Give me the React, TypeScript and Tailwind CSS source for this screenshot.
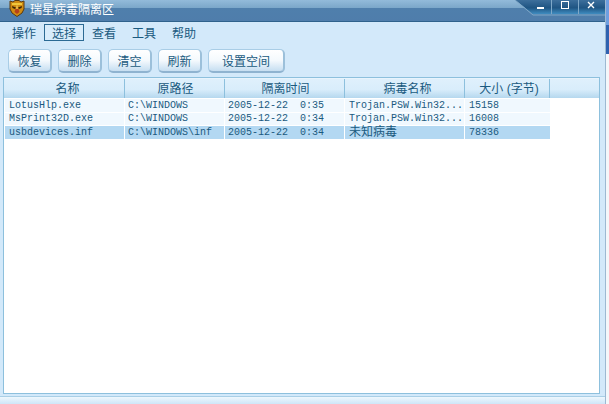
import React from "react";

const cjk = "font-['Noto_Sans_CJK_SC','Liberation_Sans',sans-serif]";
const mono = "font-['Liberation_Mono','Noto_Sans_CJK_SC',monospace]";

const menus = [
  { label: "操作", active: false },
  { label: "选择", active: true },
  { label: "查看", active: false },
  { label: "工具", active: false },
  { label: "帮助", active: false },
];

const buttons = [
  { label: "恢复", width: "w-[44px]" },
  { label: "删除", width: "w-[44px]" },
  { label: "清空", width: "w-[44px]" },
  { label: "刷新", width: "w-[44px]" },
  { label: "设置空间", width: "w-[77px]" },
];

const columns = [
  { label: "名称", width: "w-[120px] pl-[6px]" },
  { label: "原路径", width: "w-[100px] pl-[2px]" },
  { label: "隔离时间", width: "w-[120px] pl-[2px]" },
  { label: "病毒名称", width: "w-[120px] pl-[6px]" },
  { label: "大小 (字节)", width: "w-[85px] pl-[4px]" },
];

const rows = [
  { name: "LotusHlp.exe", path: "C:\\WINDOWS", time: "2005-12-22  0:35", virus: "Trojan.PSW.Win32...", size: "15158", selected: false, box: "h-[13px] mb-[1px] bg-[#f0f8fe]" },
  { name: "MsPrint32D.exe", path: "C:\\WINDOWS", time: "2005-12-22  0:34", virus: "Trojan.PSW.Win32...", size: "16008", selected: false, box: "h-[12px] mb-[1px] bg-[#f0f8fe]" },
  { name: "usbdevices.inf", path: "C:\\WINDOWS\\inf", time: "2005-12-22  0:34", virus: "未知病毒", size: "78336", selected: true, box: "h-[13px] bg-[#b3d8f2]" },
];

const LionLogo = () => (
  <svg width="16" height="17" viewBox="0 0 16 17" className="shrink-0">
    <path d="M1 1 L4 2 L6 0.5 L10 0.5 L12 2 L15 1 L15 9 L13 13 L8 16.5 L3 13 L1 9 Z" fill="#d08c12" stroke="#5a3a10" strokeWidth="1" />
    <path d="M3 3 L13 3 L13 5 L3 5 Z" fill="#f0c83c" />
    <path d="M3 6 L7 7.5 L6 9 L3.5 8 Z M13 6 L9 7.5 L10 9 L12.5 8 Z" fill="#3a2306" />
    <path d="M6.5 9 L9.5 9 L10.5 12 L8 14 L5.5 12 Z" fill="#b5401a" />
    <path d="M7.5 5.5 L8.5 5.5 L8.5 9 L7.5 9 Z" fill="#f5dc70" />
  </svg>
);

const WindowControls = () => (
  <svg width="90" height="16" viewBox="0 0 90 16" className="absolute top-0 right-0">
    <defs>
      <linearGradient id="ctl" x1="0" y1="0" x2="0" y2="1">
        <stop offset="0" stopColor="#3d6f9c" />
        <stop offset="0.55" stopColor="#1f5583" />
        <stop offset="1" stopColor="#3f8cc0" />
      </linearGradient>
    </defs>
    <path d="M0 0 L90 0 L90 14 L18 14 Z" fill="url(#ctl)" />
    <path d="M0 0 L18 15 L90 15" fill="none" stroke="#7fa8c8" strokeWidth="1" />
    <path d="M36.5 0V14M63.5 0V14" stroke="#7fa8c8" strokeWidth="1" />
    <rect x="22" y="7" width="7" height="2" fill="#fff" />
    <rect x="46.5" y="1.5" width="7" height="7" fill="none" stroke="#fff" />
    <path d="M73 2 L79 8 M79 2 L73 8" stroke="#fff" strokeWidth="1.4" />
  </svg>
);

export default function App() {
  return (
    <div className={`flex w-[609px] h-[404px] overflow-hidden bg-white text-[12px] text-[#1a5a80] ${cjk}`}>
      <div className="flex flex-col w-[606px] h-full bg-[#d3e9fa] border-r border-[#9db9d2]">
        <div className="relative flex items-center h-[22px] shrink-0 pl-[9px] pb-[4px] gap-[5px] border-b border-[#2f628c] bg-[linear-gradient(#93bbda_0%,#7ca8ca_36%,#4f7fac_40%,#4f7dab_100%)]">
          <LionLogo />
          <span className="text-white leading-none">瑞星病毒隔离区</span>
          <WindowControls />
        </div>

        <div className="flex items-center h-[19px] mt-[1px] pl-[4px] shrink-0">
          {menus.map((m) => (
            <div
              key={m.label}
              className={`flex items-center justify-center w-[40px] h-[17px] leading-none ${m.active ? "border border-[#2b6a94] bg-[#d8ecfb]" : ""}`}
            >
              {m.label}
            </div>
          ))}
        </div>

        <div className="flex gap-[6px] pl-[8px] mt-[7px] shrink-0">
          {buttons.map((b) => (
            <div
              key={b.label}
              className={`flex items-center justify-center h-[24px] ${b.width} rounded-[5px] leading-none border border-[#a9cde6] border-b-2 border-r-2 border-b-[#8fb3d0] border-r-[#9cc0da] bg-[linear-gradient(#ffffff_0%,#f4f9fd_50%,#c6def1_100%)]`}
            >
              {b.label}
            </div>
          ))}
        </div>

        <div className="flex flex-col h-[317px] mt-[4px] ml-[3px] mr-[5px] bg-white border border-[#8dc0dd] shrink-0">
          <div className="flex h-[20px] shrink-0 pl-[1px] font-['Liberation_Sans','Noto_Sans_CJK_SC',sans-serif] bg-[linear-gradient(#dff0fc_0%,#d9edfb_55%,#b5d8ee_100%)] border-t border-[#e8f4fd]">
            {columns.map((c) => (
              <div key={c.label} className={`flex items-center justify-center ${c.width} leading-none border-r border-[#8dc0dd]`}>
                {c.label}
              </div>
            ))}
            <div className="w-[48px]" />
          </div>

          <div className="flex flex-col pl-[1px] pt-[1px] text-[10px]">
            {rows.map((r) => (
              <div key={r.name} className={`flex w-[545px] items-center leading-none ${mono} ${r.box}`}>
                <div className="w-[120px] pl-[4px] border-r border-white h-full flex items-center">{r.name}</div>
                <div className="w-[100px] pl-[3px] border-r border-white h-full flex items-center">{r.path}</div>
                <div className="w-[120px] pl-[3px] border-r border-white h-full flex items-center whitespace-pre">{r.time}</div>
                <div className={`w-[120px] pl-[4px] border-r border-white h-full flex items-center ${r.selected ? "text-[12px]" : ""}`}>{r.virus}</div>
                <div className="w-[85px] pl-[4px] h-full flex items-center">{r.size}</div>
              </div>
            ))}
          </div>
        </div>

        <div className="h-[8px] mt-[2px] shrink-0 border-t border-[#a9cfe6] bg-[linear-gradient(#eef7fd_0%,#cfe6f8_100%)]" />
      </div>

      <div className="flex flex-col w-[3px] h-full bg-[#f4f7fa]">
        <div className="h-[25px] bg-[#6f9fe0]" />
        <div className="h-[29px] bg-[#2f62b0]" />
      </div>
    </div>
  );
}
